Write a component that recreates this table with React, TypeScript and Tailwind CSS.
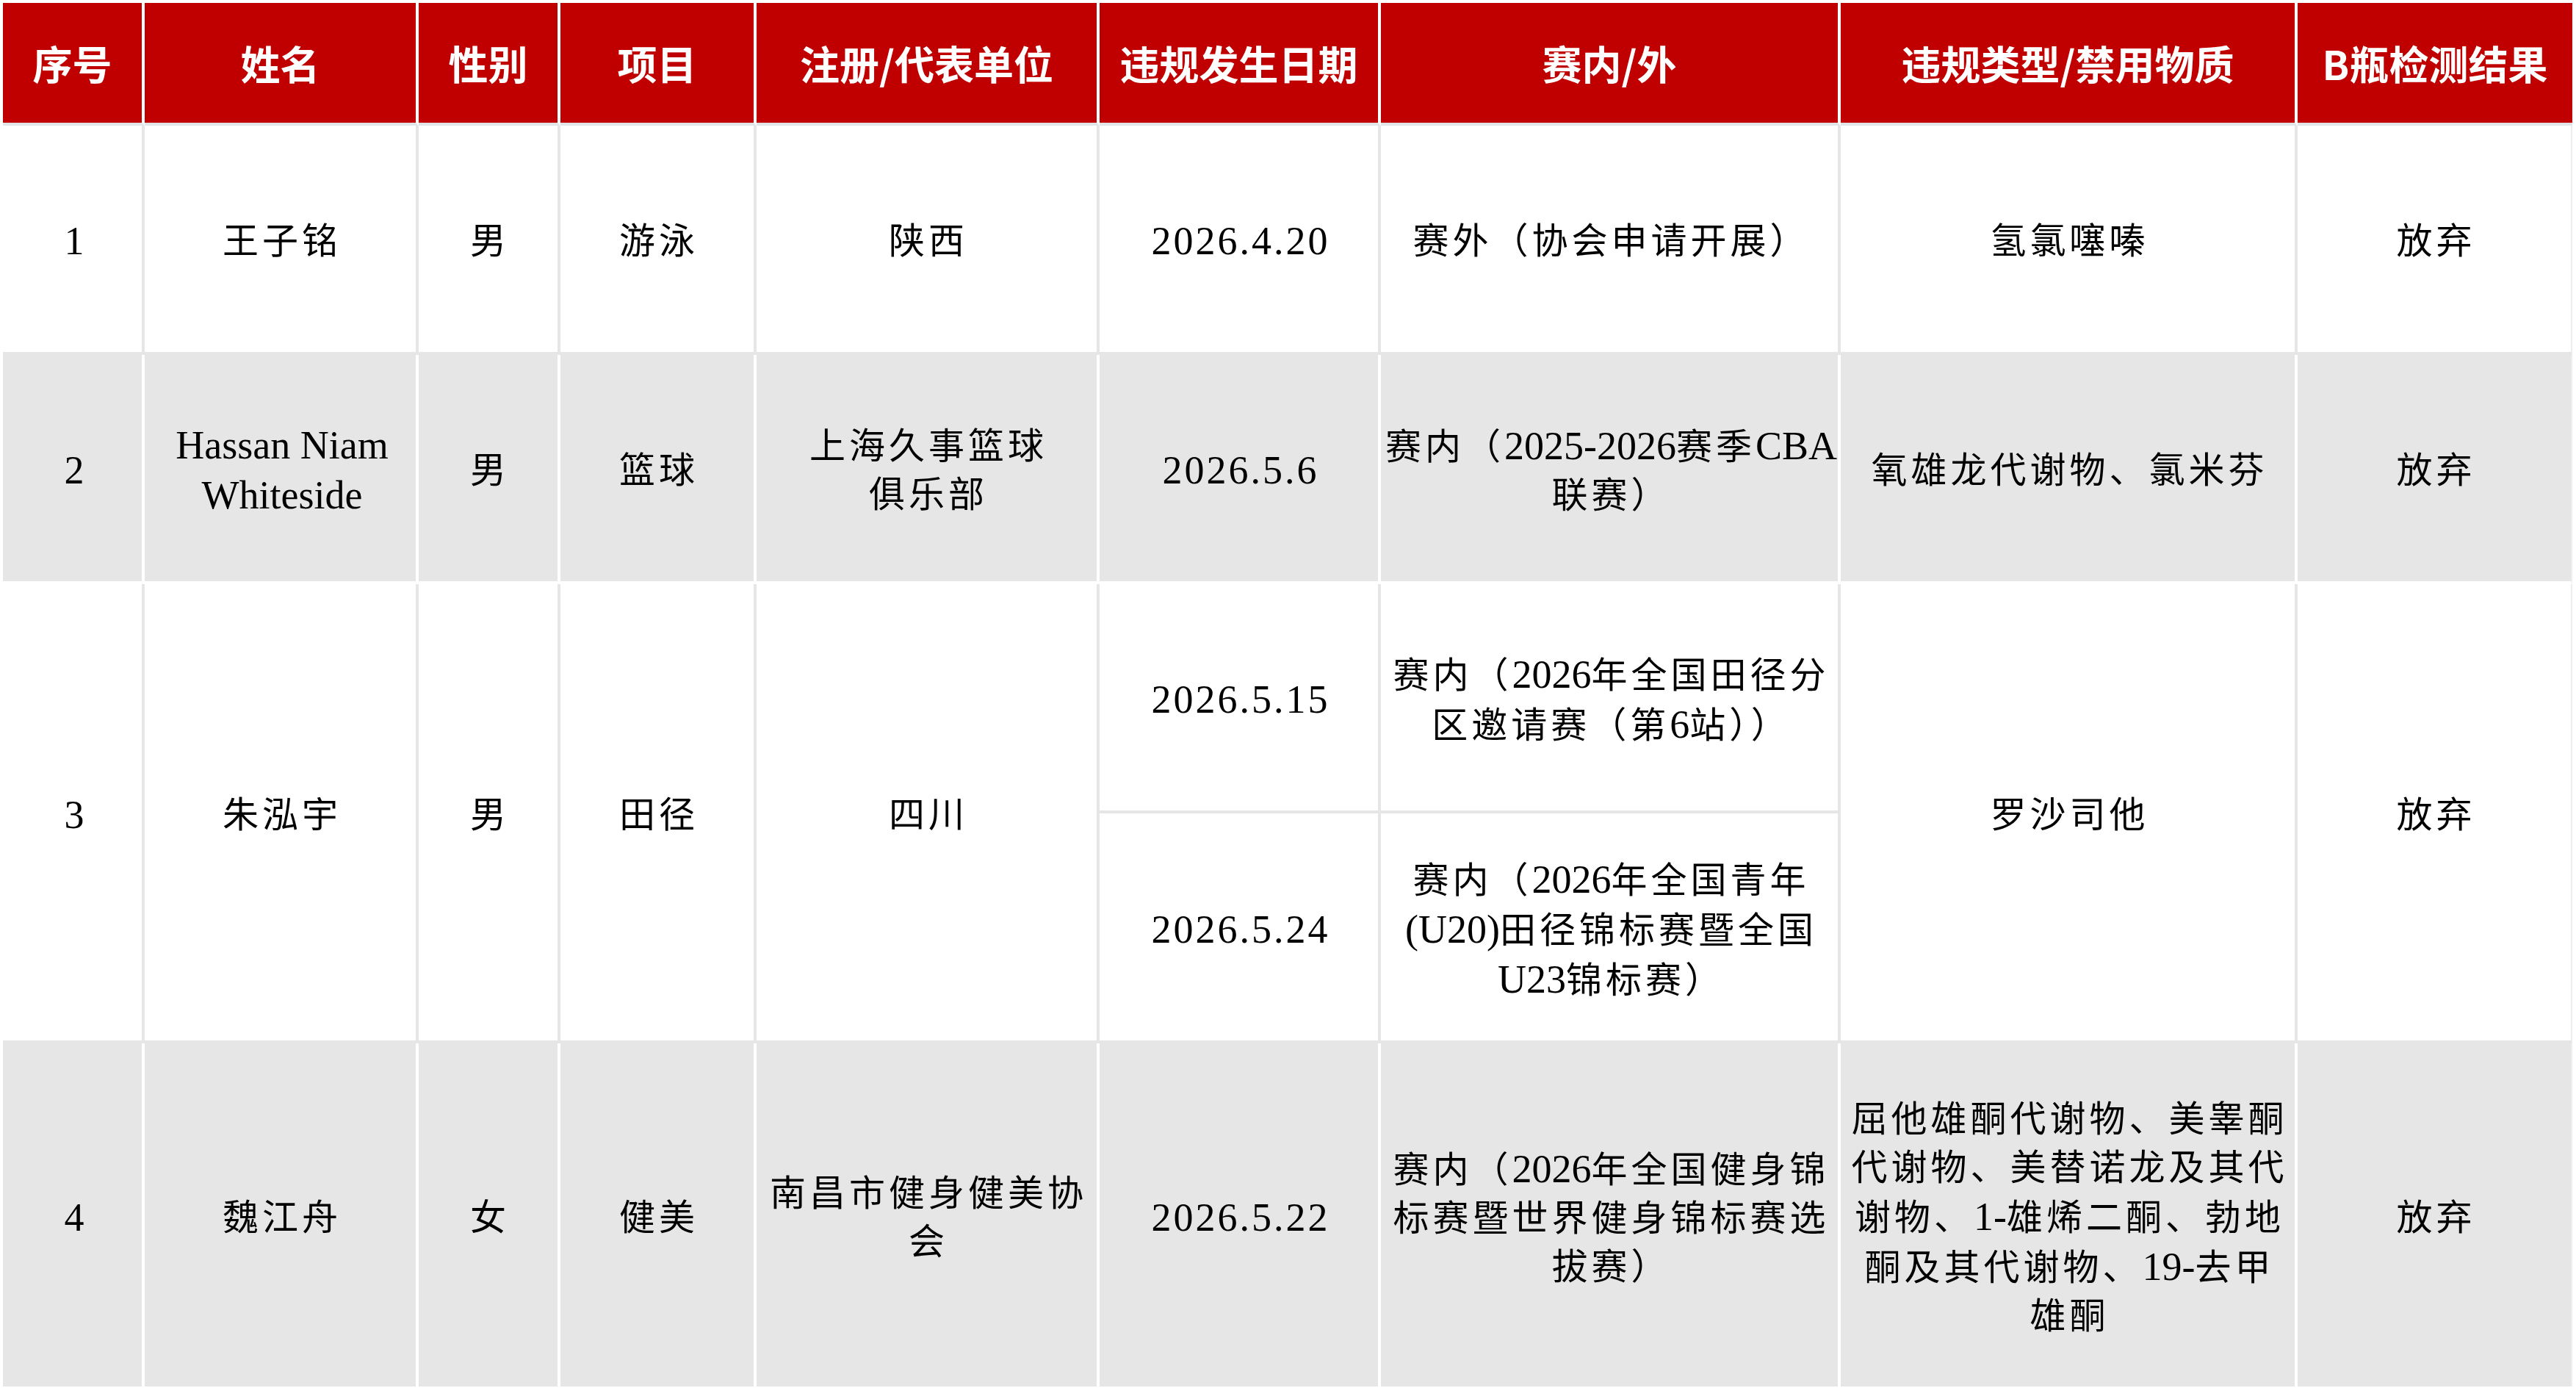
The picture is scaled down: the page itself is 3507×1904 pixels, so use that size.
import type { ReactNode } from 'react'

type Tone = 'head' | 'white' | 'gray'

type Row = {
  tone: 'white' | 'gray'
  cells: string[]
}

const headers = ['序号', '姓名', '性别', '项目', '注册/代表单位', '违规发生日期', '赛内/外', '违规类型/禁用物质', 'B瓶检测结果']

const rows: Row[] = [
  {
    tone: 'white',
    cells: ['1', '王子铭', '男', '游泳', '陕西', '2026.4.20', '赛外（协会申请开展）', '氢氯噻嗪', '放弃'],
  },
  {
    tone: 'gray',
    cells: [
      '2',
      'Hassan Niam\nWhiteside',
      '男',
      '篮球',
      '上海久事篮球\n俱乐部',
      '2026.5.6',
      '赛内（2025-2026赛季CBA\n联赛）',
      '氧雄龙代谢物、氯米芬',
      '放弃',
    ],
  },
]

const lastRow: Row = {
  tone: 'gray',
  cells: [
    '4',
    '魏江舟',
    '女',
    '健美',
    '南昌市健身健美协\n会',
    '2026.5.22',
    '赛内（2026年全国健身锦\n标赛暨世界健身锦标赛选\n拔赛）',
    '屈他雄酮代谢物、美睾酮\n代谢物、美替诺龙及其代\n谢物、1-雄烯二酮、勃地\n酮及其代谢物、19-去甲\n雄酮',
    '放弃',
  ],
}

// latin runs are set larger and without the cjk spacing, like half-width glyphs
function Runs({ text, wide }: { text: string; wide: boolean }) {
  const parts = text.split(/([\x20-\x7E]+)/).filter(Boolean)
  return (
    <>
      {parts.map((part, i) =>
        /^[\x20-\x7E]+$/.test(part) ? (
          <span key={i} className={`text-[54px] ${wide ? 'tracking-[3px]' : 'tracking-normal'}`}>
            {part}
          </span>
        ) : (
          <span key={i}>{part}</span>
        ),
      )}
    </>
  )
}

function Cell({
  tone,
  last = false,
  bottom = true,
  span = false,
  children,
}: {
  tone: Tone
  last?: boolean
  bottom?: boolean
  span?: boolean
  children: ReactNode
}) {
  const toneClass =
    tone === 'head'
      ? 'bg-[#c00000] border-white border-b-[#e1e5e8] text-white'
      : tone === 'white'
        ? 'bg-white border-[#e6e6e6] text-black'
        : 'bg-[#e6e6e6] border-white text-black'
  return (
    <div
      className={`flex items-center justify-center text-center ${toneClass} ${
        last ? (tone === 'head' ? 'border-r-0' : 'border-r-2 border-r-[#eeeeee]') : 'border-r-4'
      } ${bottom ? 'border-b-4' : 'border-b-0'} ${span ? 'row-span-2' : ''}`}
    >
      {children}
    </div>
  )
}

function Body({ text, wide = false }: { text: string; wide?: boolean }) {
  return (
    <div className="pl-[5px] pt-2 text-[49px] leading-[66px] tracking-[5px]">
      {text.split('\n').map((line, i) => (
        <div key={i} className="whitespace-nowrap">
          <Runs text={line} wide={wide} />
        </div>
      ))}
    </div>
  )
}

export default function App() {
  return (
    <div className="h-[1904px] w-[3507px] bg-white pl-1 pt-1 font-['Liberation_Serif','Noto_Sans_CJK_SC',serif]">
      <div className="grid grid-cols-[193px_373px_193px_267px_467px_383px_626px_622px_374px] grid-rows-[167px_312px_312px_312px_313px_467px]">
        {headers.map((h, i) => (
          <Cell key={h} tone="head" last={i === headers.length - 1}>
            <span className="font-['Noto_Sans_CJK_SC',sans-serif] text-[54px] font-bold leading-none">{h}</span>
          </Cell>
        ))}

        {rows.map((row, r) =>
          row.cells.map((c, i) => (
            <Cell key={`${r}-${i}`} tone={row.tone} last={i === 8}>
              <Body text={c} wide={i === 5} />
            </Cell>
          )),
        )}

        {/* row 3: two violations for one athlete */}
        <Cell tone="white" span>
          <Body text="3" />
        </Cell>
        <Cell tone="white" span>
          <Body text="朱泓宇" />
        </Cell>
        <Cell tone="white" span>
          <Body text="男" />
        </Cell>
        <Cell tone="white" span>
          <Body text="田径" />
        </Cell>
        <Cell tone="white" span>
          <Body text="四川" />
        </Cell>
        <Cell tone="white">
          <Body text="2026.5.15" wide />
        </Cell>
        <Cell tone="white">
          <Body text={'赛内（2026年全国田径分\n区邀请赛（第6站））'} />
        </Cell>
        <Cell tone="white" span>
          <Body text="罗沙司他" />
        </Cell>
        <Cell tone="white" span last>
          <Body text="放弃" />
        </Cell>
        <Cell tone="white">
          <Body text="2026.5.24" wide />
        </Cell>
        <Cell tone="white">
          <Body text={'赛内（2026年全国青年\n(U20)田径锦标赛暨全国\nU23锦标赛）'} />
        </Cell>

        {lastRow.cells.map((c, i) => (
          <Cell key={`last-${i}`} tone={lastRow.tone} last={i === 8} bottom={false}>
            <Body text={c} wide={i === 5} />
          </Cell>
        ))}
      </div>
    </div>
  )
}
